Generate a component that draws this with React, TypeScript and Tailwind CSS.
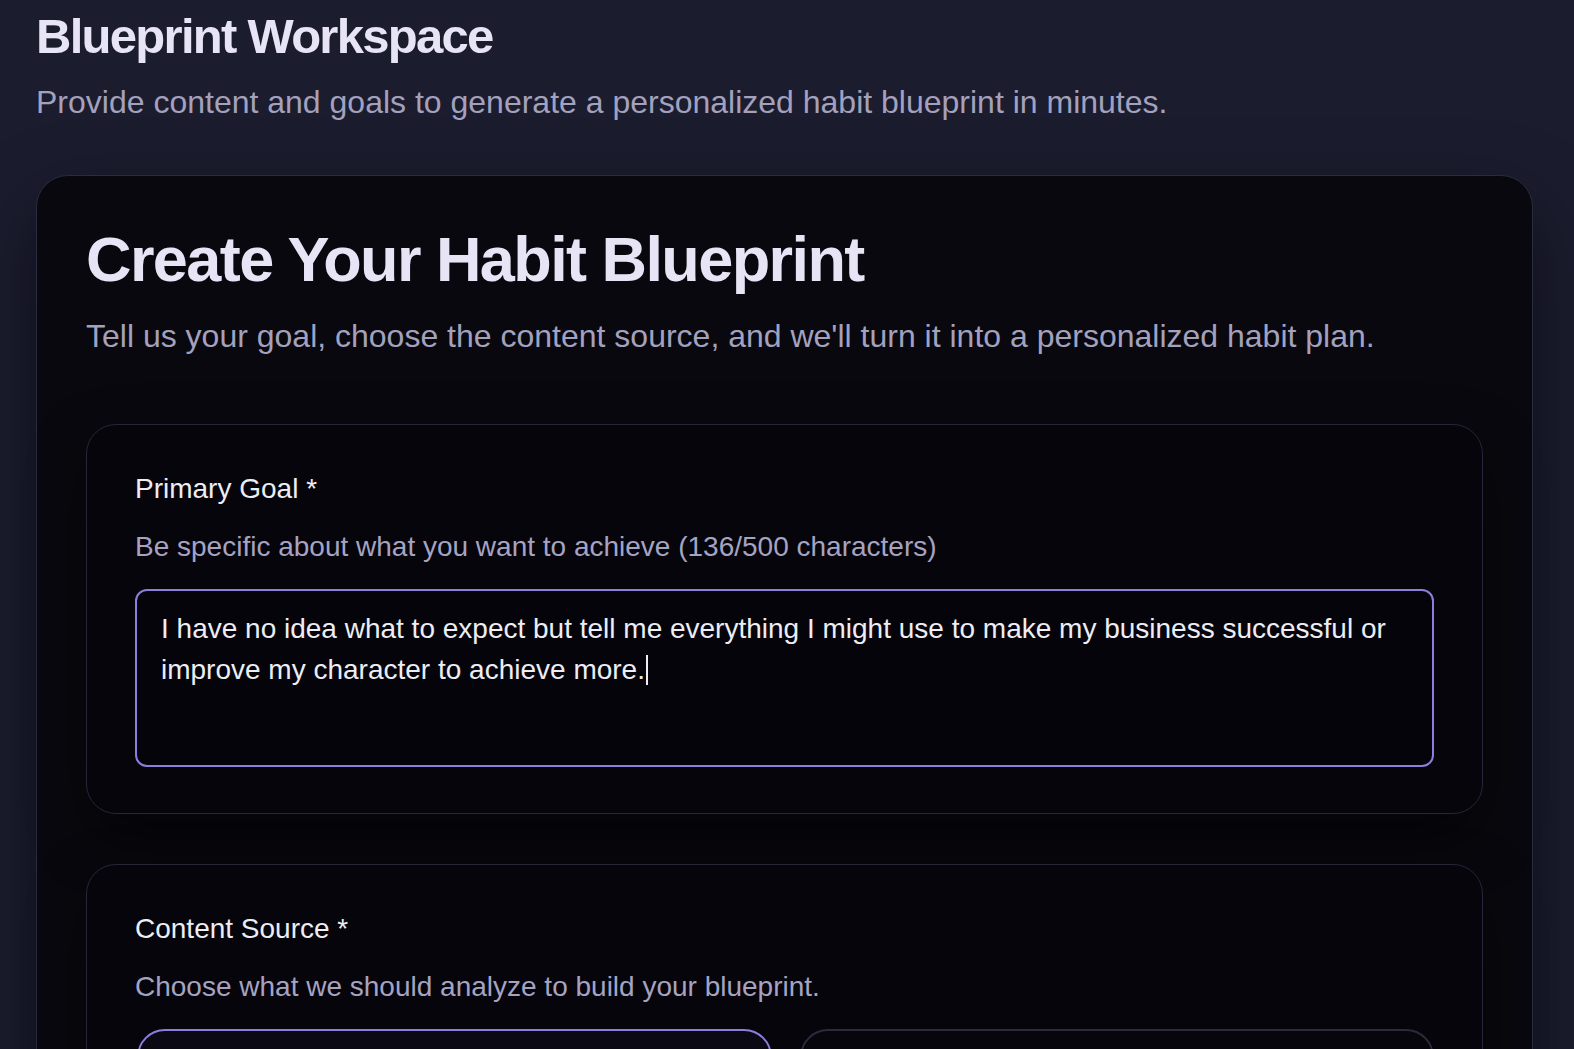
import React from 'react';

const FONT = { fontFamily: '"Liberation Sans", Arial, Helvetica, sans-serif' };

function Section({ label, hint, children }: { label: string; hint: string; children: React.ReactNode }) {
  return (
    <section className="rounded-[30px] border border-[#25263a] bg-[#05050b] px-[48px] pt-[46px] pb-[46px] shadow-[0_24px_60px_rgba(0,0,0,0.45)]">
      <label className="block text-[28px] leading-[36px] text-[#ededf5]">{label}</label>
      <p className="mt-[22px] text-[28px] leading-[36px] text-[#a6a3c2]">{hint}</p>
      <div className="mt-[24px]">{children}</div>
    </section>
  );
}

export default function App() {
  const goal =
    'I have no idea what to expect but tell me everything I might use to make my business successful or improve my character to achieve more.';

  return (
    <div className="min-h-screen bg-[#1b1c2e] pl-[36px] pr-[41px] pt-[10px] pb-[60px]" style={FONT}>
      {/* Page header */}
      <h1 className="text-[49px] leading-[53px] font-bold tracking-[-0.035em] text-[#e6e4f5]">
        Blueprint Workspace
      </h1>
      <p className="mt-[19px] text-[32px] leading-[40px] text-[#a3a1bd]">
        Provide content and goals to generate a personalized habit blueprint in minutes.
      </p>

      {/* Main card */}
      <div className="mt-[53px] rounded-[32px] border border-[#2a2b3e] bg-[#08080e] px-[49px] pt-[48px] pb-[50px] shadow-[0_30px_80px_rgba(0,0,0,0.45)]">
        <h2 className="text-[63px] leading-[70px] font-bold tracking-tight text-[#e6e4f5]">
          Create Your Habit Blueprint
        </h2>
        <p className="mt-[20px] text-[32px] leading-[44px] text-[#a3a1bd]">
          Tell us your goal, choose the content source, and we'll turn it into a personalized habit plan.
        </p>

        <div className="mt-[66px] flex flex-col gap-[50px]">
          <Section label="Primary Goal *" hint="Be specific about what you want to achieve (136/500 characters)">
            <div className="h-[178px] rounded-[12px] border-2 border-[#8a7fdc] bg-[#04040a] px-[24px] pt-[18px] text-[28px] leading-[40px] text-[#ededf5]">
              {goal}
              <span className="ml-[1px] inline-block h-[30px] w-[2px] translate-y-[6px] bg-[#ededf5]" />
            </div>
          </Section>

          <Section label="Content Source *" hint="Choose what we should analyze to build your blueprint.">
            <div className="grid grid-cols-2 gap-[28px] pl-[2px]">
              <div className="h-[220px] rounded-[28px] border-2 border-[#8a7fdc] bg-[#0a0914]" />
              <div className="h-[220px] rounded-[28px] border-2 border-[#2a2b3e] bg-[#06060c]" />
            </div>
          </Section>
        </div>
      </div>
    </div>
  );
}
